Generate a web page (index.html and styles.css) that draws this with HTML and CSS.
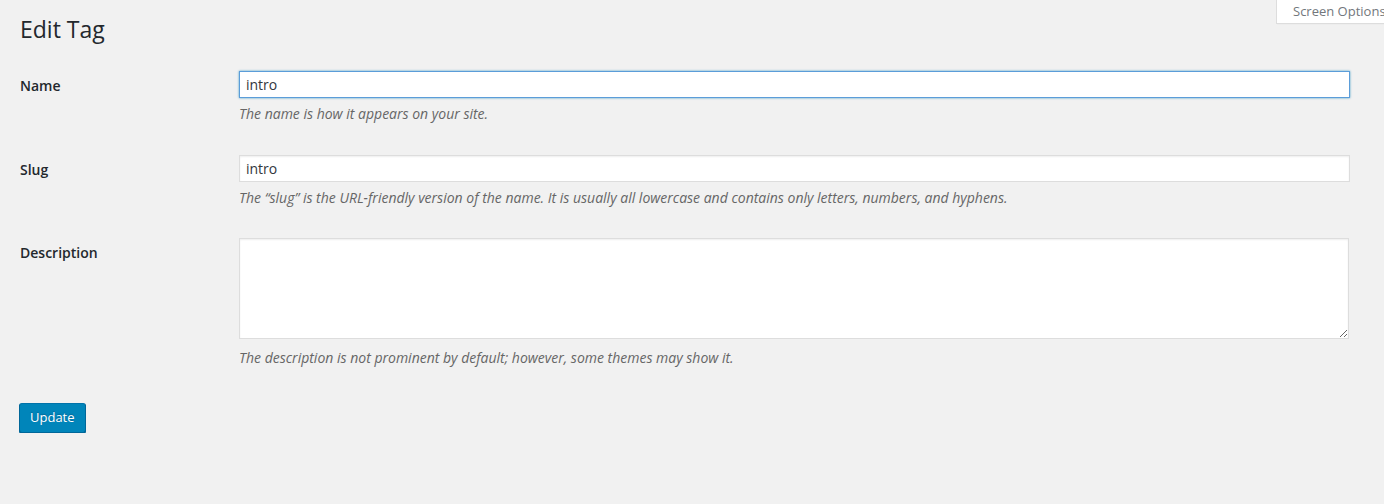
FILE: index.html
```html
<!DOCTYPE html>
<html lang="en">
<head>
<meta charset="utf-8">
<title>Edit Tag</title>
<link rel="stylesheet" href="styles.css">
</head>
<body>
<div class="wrap">
  <div class="header">
    <h1 class="title">Edit Tag</h1>
    <button class="screen-options" type="button">Screen Options</button>
  </div>
  <form class="form">
    <div class="row">
      <label class="label" for="name">Name</label>
      <div class="field">
        <input class="input input-focus" id="name" type="text" value="intro">
        <p class="desc">The name is how it appears on your site.</p>
      </div>
    </div>
    <div class="row row-slug">
      <label class="label" for="slug">Slug</label>
      <div class="field">
        <input class="input" id="slug" type="text" value="intro">
        <p class="desc">The “slug” is the URL-friendly version of the name. It is usually all lowercase and contains only letters, numbers, and hyphens.</p>
      </div>
    </div>
    <div class="row row-last">
      <label class="label" for="description">Description</label>
      <div class="field">
        <textarea class="textarea" id="description"></textarea>
        <p class="desc desc-textarea">The description is not prominent by default; however, some themes may show it.</p>
      </div>
    </div>
    <div class="actions">
      <button class="button-primary" type="button">Update</button>
    </div>
  </form>
</div>
</body>
</html>
```
FILE: styles.css
```css
html, body {
  margin: 0;
  padding: 0;
  background: #f1f1f1;
  overflow: hidden;
}
body {
  font-family: "Open Sans", "Liberation Sans", sans-serif;
  font-size: 13px;
  color: #444;
}
.wrap {
  padding: 0 34px 0 20px;
}
.header {
  display: flex;
  justify-content: space-between;
  align-items: flex-start;
}
.title {
  margin: 15px 0 0;
  font-size: 23px;
  font-weight: 400;
  line-height: 29px;
  color: #23282d;
}
.screen-options {
  margin: -1px -96px 0 0;
  height: 25px;
  padding: 0 16px 0 16px;
  background: #fff;
  border: 1px solid #ddd;
  border-top: none;
  box-shadow: 0 1px 1px -1px rgba(0,0,0,.1);
  font-family: "Open Sans", "Liberation Sans", sans-serif;
  font-size: 13px;
  color: #72777c;
  line-height: 23px;
  white-space: nowrap;
  width: 170px;
  text-align: left;
}
.form {
  margin-top: 27px;
}
.row {
  display: flex;
  align-items: flex-start;
  margin-bottom: 31px;
}
.row-slug {
  margin-bottom: 30px;
}
.row-last {
  margin-bottom: 35px;
}
.label {
  width: 219px;
  flex: none;
  padding-top: 5px;
  font-size: 14px;
  font-weight: 600;
  line-height: 20px;
  color: #23282d;
}
.field {
  flex: 1;
  min-width: 0;
}
.input {
  display: block;
  box-sizing: border-box;
  width: 100%;
  height: 27px;
  margin: 0;
  padding: 3px 6px;
  border: 1px solid #ddd;
  background: #fff;
  box-shadow: inset 0 1px 2px rgba(0,0,0,.07);
  font-family: "Open Sans", "Liberation Sans", sans-serif;
  font-size: 14px;
  color: #32373c;
  outline: none;
}
.input-focus {
  border-color: #5b9dd9;
  box-shadow: 0 0 2px rgba(30,140,190,.8);
}
.textarea {
  display: block;
  box-sizing: border-box;
  width: calc(100% - 1px);
  height: 101px;
  margin: 0;
  padding: 3px 6px;
  border: 1px solid #ddd;
  background: #fff;
  box-shadow: inset 0 1px 2px rgba(0,0,0,.07);
  font-family: "Open Sans", "Liberation Sans", sans-serif;
  font-size: 14px;
  outline: none;
}
.desc {
  margin: 5px 0 0;
  font-size: 14px;
  line-height: 21px;
  font-style: italic;
  color: #666;
}
.desc-textarea {
  margin-top: 8px;
}
.actions {
  margin-left: -1px;
}
.button-primary {
  height: 30px;
  padding: 0 10px 2px;
  background: #0085ba;
  border: 1px solid;
  border-color: #0073aa #006799 #006799;
  border-radius: 3px;
  box-shadow: 0 1px 0 #006799;
  color: #fff;
  font-family: "Open Sans", "Liberation Sans", sans-serif;
  font-size: 13px;
  line-height: 26px;
  text-shadow: 0 -1px 1px #006799;
}
```
